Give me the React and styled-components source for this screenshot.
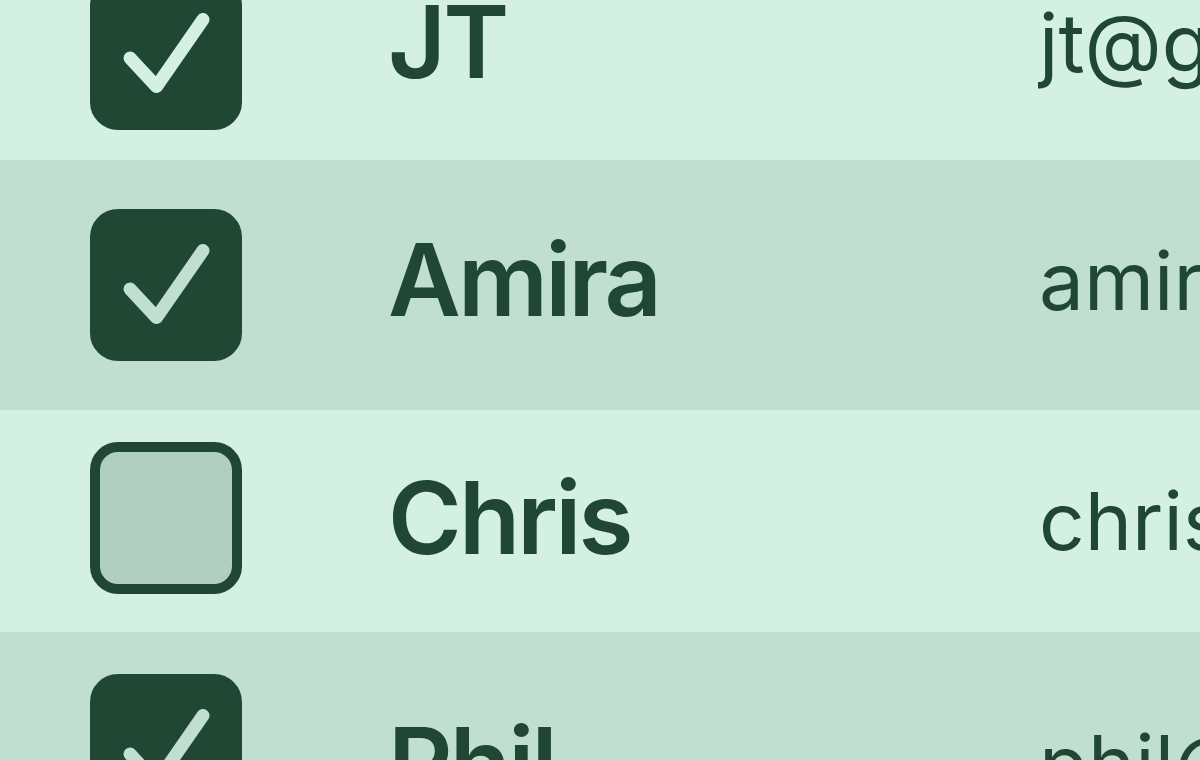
import styled, { createGlobalStyle } from "styled-components"

const GlobalStyle = createGlobalStyle`
    html, body {
        margin: 0;
        padding: 0;
        overflow: hidden;
        background: #d3f0e2;
    }
    body {
        font-family: Inter, "Noto Sans", sans-serif;
        color: #1f4733;
    }
`

const users = [
    { name: "JT", email: "jt@gmail.com", checked: true, height: 212, nameShift: -12, mailShift: -11, boxShift: 0 },
    { name: "Amira", email: "amira@gmail.com", checked: true, height: 250, nameShift: -5, mailShift: -4, boxShift: 0 },
    { name: "Chris", email: "chris@gmail.com", checked: false, height: 222, nameShift: -3, mailShift: 0, boxShift: -3 },
    { name: "Phil", email: "phil@gmail.com", checked: true, height: 236, nameShift: 14, mailShift: 14, boxShift: 0 },
]

export default function App() {
    return (
        <>
            <GlobalStyle />
            <Table>
                {users.map((u, i) => (
                    <Row key={u.name} $height={u.height} $striped={i % 2 === 1}>
                        <CheckCell $shift={u.boxShift}>
                            <Checkbox $checked={u.checked}>
                                {u.checked && (
                                    <svg width="152" height="152" viewBox="0 0 152 152">
                                        <path
                                            d="M40 80 L66.5 108.5 L113 41.5"
                                            fill="none"
                                            stroke="currentColor"
                                            strokeWidth="13"
                                            strokeLinecap="round"
                                            strokeLinejoin="round"
                                        />
                                    </svg>
                                )}
                            </Checkbox>
                        </CheckCell>
                        <Name $shift={u.nameShift}>{u.name}</Name>
                        <Email $shift={u.mailShift}>{u.email}</Email>
                    </Row>
                ))}
            </Table>
        </>
    )
}

const Table = styled.div`
    display: flex;
    flex-direction: column;
    margin-top: -52px;
    width: 1200px;
`
const Row = styled.div`
    display: grid;
    grid-template-columns: 300px 650px 1fr;
    align-items: center;
    padding-left: 90px;
    height: ${(p) => p.$height}px;
    background: ${(p) => (p.$striped ? "#c1dfd1" : "#d3f0e2")};
    color: ${(p) => (p.$striped ? "#c1dfd1" : "#d3f0e2")};
    overflow: hidden;
`
const CheckCell = styled.div`
    display: flex;
    align-items: center;
    position: relative;
    top: ${(p) => p.$shift}px;
`
const Checkbox = styled.div`
    box-sizing: border-box;
    width: 152px;
    height: 152px;
    border-radius: 28px;
    border: 10px solid #1f4733;
    background: ${(p) => (p.$checked ? "#1f4733" : "#b0cfc1")};
    display: flex;
    align-items: center;
    justify-content: center;
    > svg {
        flex: none;
        margin: -10px;
    }
`
const Name = styled.div`
    font-size: 100px;
    font-weight: 600;
    letter-spacing: -0.028em;
    line-height: 1.2;
    color: #1f4733;
    white-space: nowrap;
    position: relative;
    left: -2px;
    top: ${(p) => p.$shift}px;
`
const Email = styled.div`
    font-size: 80px;
    font-weight: 400;
    line-height: 1.2;
    color: #1f4733;
    white-space: nowrap;
    position: relative;
    left: -1px;
    top: ${(p) => p.$shift}px;
`
